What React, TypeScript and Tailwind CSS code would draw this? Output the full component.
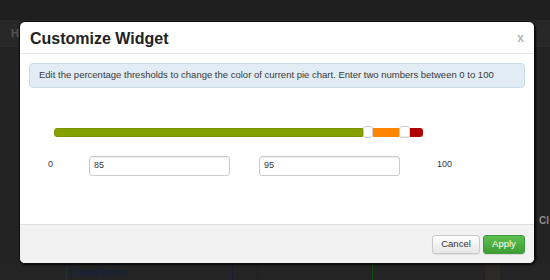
import React from "react";

export default function App() {
  const font = { fontFamily: '"Liberation Sans", Arial, Helvetica, sans-serif' };
  return (
    <div className="relative w-[550px] h-[280px] overflow-hidden bg-[#232323]" style={font}>
      {/* backdrop page content (behind the modal) */}
      <div className="flex flex-col h-full">
        <div className="h-[20px] bg-[#1f1f1f]" />
        <div className="h-[27px] bg-[#282828] border-b border-[#2c2c2c] flex items-center pl-[11px]">
          <span className="text-[11px] font-bold text-[#555]">H</span>
        </div>
        <div className="flex-1 flex justify-end pt-[166px]">
          <span className="text-[10px] font-bold text-[#8a8a8a] w-[11px] whitespace-nowrap">Cl</span>
        </div>
        <div className="h-[16px] flex items-center bg-[#242424]">
          <div className="w-[67px] h-full border-r border-[#2b2b2b]" />
          <span className="text-[10px] font-bold text-[#17223c] w-[165px]">1 DataNodes</span>
          <div className="w-[1px] h-full bg-[#1d1d3a]" />
          <div className="w-[24px] h-full" />
          <div className="w-[1px] h-full bg-[#1d1d3a]" />
          <div className="w-[114px] h-full" />
          <div className="w-[1px] h-full bg-[#0d4d0d]" />
          <div className="w-[112px] h-full" />
          <div className="w-[15px] h-full bg-[#2c2a26]" />
        </div>
      </div>

      {/* modal */}
      <div className="absolute left-[19px] top-[21px] w-[516px] h-[243px] bg-white border border-[#0d0d0d] rounded-[6px] shadow-[1px_1px_2px_rgba(0,0,0,0.8)] flex flex-col overflow-hidden">
        <div className="h-[32px] shrink-0 border-b border-[#e8e8e8] flex items-center justify-between pl-[10px] pr-[10px]">
          <span className="text-[16px] font-bold text-[#222] leading-none pt-[3px]">Customize Widget</span>
          <span className="text-[12px] font-bold text-[#b5b5b5] leading-none pt-[1px]">x</span>
        </div>

        <div className="flex-1 px-[9px] pt-[9px]">
          <div className="h-[25px] bg-[#e1ecf4] border border-[#c9dbe7] rounded-[4px] flex items-center pl-[9px] text-[9.5px] text-[#3a3a3a] whitespace-nowrap">
            Edit the percentage thresholds to change the color of current pie chart. Enter two numbers between 0 to 100
          </div>

          <div className="ml-[25px] mt-[38px] w-[369px] h-[12px] flex items-center">
            <div className="w-[309px] h-[9px] bg-[#86a200] rounded-l-[3px] border border-[#7a9200]" />
            <div className="w-[10px] h-[12px] bg-white border border-[#cfcfcf] rounded-[3px] shadow-[inset_0_-1px_1px_rgba(0,0,0,0.08)]" />
            <div className="w-[26px] h-[9px] bg-[#ff8400]" />
            <div className="w-[11px] h-[12px] bg-white border border-[#cfcfcf] rounded-[3px] shadow-[inset_0_-1px_1px_rgba(0,0,0,0.08)]" />
            <div className="w-[13px] h-[9px] bg-[#b00000] rounded-r-[3px]" />
          </div>

          <div className="mt-[18px] flex items-start text-[9px] text-[#333]">
            <span className="ml-[19px] w-[41px] pt-[2px]">0</span>
            <div className="w-[141px] h-[20px] border border-[#cccccc] rounded-[3px] flex items-center pl-[4px] shadow-[inset_0_1px_1px_rgba(0,0,0,0.075)]">85</div>
            <div className="w-[29px]" />
            <div className="w-[141px] h-[20px] border border-[#cccccc] rounded-[3px] flex items-center pl-[4px] shadow-[inset_0_1px_1px_rgba(0,0,0,0.075)]">95</div>
            <span className="ml-[37px] pt-[2px]">100</span>
          </div>
        </div>

        <div className="h-[39px] shrink-0 bg-[#f2f2f2] border-t border-[#dddddd] flex items-start justify-end pt-[10px] pr-[9px] gap-[3px]">
          <div className="w-[48px] h-[19px] rounded-[3px] border border-[#c8c8c8] bg-gradient-to-b from-white to-[#e6e6e6] flex items-center justify-center text-[9.5px] text-[#333] shadow-[0_1px_1px_rgba(0,0,0,0.08)]">
            Cancel
          </div>
          <div className="w-[42px] h-[19px] rounded-[3px] border border-[#3f9a3f] bg-gradient-to-b from-[#5cbf4f] to-[#3f9d34] flex items-center justify-center text-[9.5px] text-white shadow-[0_1px_1px_rgba(0,0,0,0.1)]">
            Apply
          </div>
        </div>
      </div>
    </div>
  );
}
